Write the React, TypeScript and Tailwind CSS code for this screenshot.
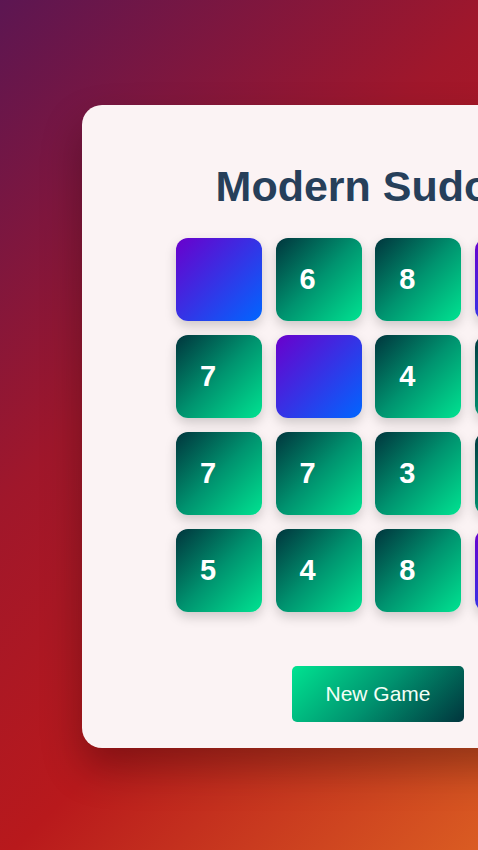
const cells: (number | null)[][] = [
  [null, 6, 8, null],
  [7, null, 4, 2],
  [7, 7, 3, 1],
  [5, 4, 8, null],
];

function Cell({ value }: { value: number | null }) {
  if (value === null) {
    return (
      <div className="h-[83px] w-[86px] rounded-[12px] bg-[linear-gradient(135deg,#6a00cc_0%,#0066ff_100%)] shadow-[0_5px_12px_rgba(0,0,0,0.18)]" />
    );
  }
  return (
    <div className="flex h-[83px] w-[86px] items-center rounded-[12px] bg-[linear-gradient(135deg,#01353d_0%,#00936f_50%,#00e391_100%)] pl-[24px] text-[29px] font-bold text-white shadow-[0_5px_12px_rgba(0,0,0,0.18)]">
      {value}
    </div>
  );
}

export default function App() {
  return (
    <main
      className="h-[850px] w-full overflow-hidden pt-[105px] pl-[82px]"
      style={{
        background:
          "linear-gradient(135deg, #5c1652 0%, #a0172b 38%, #b8191c 65%, #da5c22 100%)",
        fontFamily: '"Liberation Sans", Arial, sans-serif',
      }}
    >
      <div className="flex w-[592px] flex-col rounded-[20px] bg-[#fbf3f4] pt-[55px] pb-[26px] shadow-[0_20px_40px_rgba(0,0,0,0.3)]">
        <h1 className="text-center text-[43px] leading-[52px] font-bold text-[#263f5a]">
          Modern Sudoku
        </h1>

        <div className="mt-[26px] ml-[94px] grid w-max grid-cols-4 gap-x-[13.6px] gap-y-[14px]">
          {cells.map((row, r) =>
            row.map((v, c) => <Cell key={`${r}-${c}`} value={v} />)
          )}
        </div>

        <div className="mt-[54px] flex justify-center">
          <button className="h-[56px] w-[172px] rounded-[5px] bg-[linear-gradient(135deg,#00e391_0%,#00936f_50%,#01353d_100%)] text-[21px] text-[#f3fff6]">
            New Game
          </button>
        </div>
      </div>
    </main>
  );
}
